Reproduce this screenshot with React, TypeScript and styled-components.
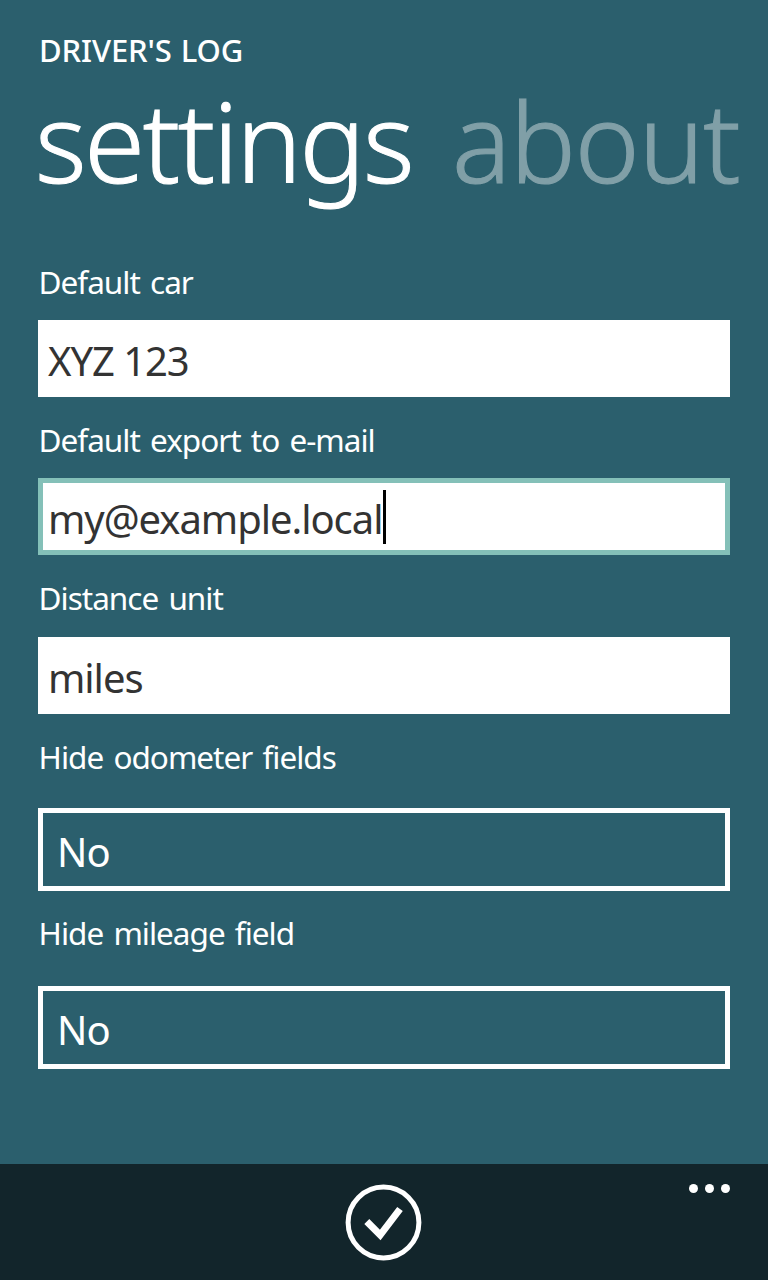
import React from "react";
import styled, { createGlobalStyle } from "styled-components";

const GlobalStyle = createGlobalStyle`
  * { box-sizing: border-box; }
  body { margin: 0; background: #2b5f6d; }
`;

const Page = styled.div`
  width: 768px;
  height: 1280px;
  display: flex;
  flex-direction: column;
  overflow: hidden;
  background: #2b5f6d;
  color: #fff;
  font-family: "Noto Sans", "Open Sans", sans-serif;
  white-space: nowrap;
`;

const AppTitle = styled.h1`
  margin: 30px 0 0 39px;
  height: 40px;
  font-size: 31px;
  line-height: 40px;
  font-weight: 500;
  letter-spacing: -0.1px;
  word-spacing: 1px;
`;

const Pivot = styled.nav`
  display: flex;
  height: 120px;
  margin-top: 10px;
  padding-left: 35px;
  font-size: 110px;
  line-height: 120px;
  font-weight: 300;
  -webkit-text-stroke: 1.1px #fff;
`;

const PivotItem = styled.span<{ $width: number; $tracking: number; $active?: boolean }>`
  width: ${(p) => p.$width}px;
  flex: none;
  letter-spacing: ${(p) => p.$tracking}px;
  opacity: ${(p) => (p.$active ? 1 : 0.4)};
`;

const Form = styled.main`
  flex: 1;
  padding: 62px 38px 0;
`;

const Label = styled.label<{ $gap: number }>`
  display: block;
  height: 40px;
  margin-bottom: ${(p) => p.$gap}px;
  padding-left: 0.6px;
  font-size: 31.5px;
  line-height: 40px;
  letter-spacing: -1px;
  word-spacing: 3px;
`;

const Field = styled.div<{ $focused?: boolean }>`
  display: flex;
  align-items: center;
  height: 77px;
  margin-bottom: 23px;
  padding: 4px 0 0 5px;
  border: 5px solid ${(p) => (p.$focused ? "#84c0b8" : "#fff")};
  background: #fff;
  color: #333;
  font-size: 40px;
  letter-spacing: -1.05px;
`;

const Caret = styled.span`
  width: 3px;
  height: 54px;
  margin: -4px 0 0 1px;
  background: #000;
`;

const Picker = styled.div`
  display: flex;
  align-items: center;
  height: 83px;
  margin-bottom: 22px;
  padding: 4px 0 0 14px;
  border: 5px solid #fff;
  font-size: 40px;
  letter-spacing: -0.9px;
`;

const AppBar = styled.footer`
  display: grid;
  grid-template-columns: 1fr 76px 1fr;
  height: 116px;
  padding-top: 20px;
  background: #12252b;
`;

const Confirm = styled.svg`
  grid-column: 2;
  width: 76px;
  height: 76px;
  overflow: visible;
`;

const More = styled.div`
  display: flex;
  justify-content: flex-end;
  gap: 7px;
  padding-right: 38px;
`;

const Dot = styled.i`
  width: 9px;
  height: 9px;
  border-radius: 50%;
  background: #fff;
`;

export default function App() {
  return (
    <Page>
      <GlobalStyle />
      <AppTitle>DRIVER'S LOG</AppTitle>
      <Pivot>
        <PivotItem $width={417} $tracking={-2.3} $active>settings</PivotItem>
        <PivotItem $width={310} $tracking={-1}>about</PivotItem>
      </Pivot>
      <Form>
        <Label $gap={18}>Default car</Label>
        <Field>XYZ 123</Field>
        <Label $gap={18}>Default export to e-mail</Label>
        <Field $focused>my@example.local<Caret /></Field>
        <Label $gap={19}>Distance unit</Label>
        <Field>miles</Field>
        <Label $gap={31}>Hide odometer fields</Label>
        <Picker>No</Picker>
        <Label $gap={33}>Hide mileage field</Label>
        <Picker>No</Picker>
      </Form>
      <AppBar>
        <Confirm viewBox="0 0 76 76" fill="none" stroke="#fff">
          <circle cx="37.5" cy="38.5" r="35.4" strokeWidth="5" />
          <path d="M20.8 37.5L34.2 51L54 25" strokeWidth="7" />
        </Confirm>
        <More><Dot /><Dot /><Dot /></More>
      </AppBar>
    </Page>
  );
}
